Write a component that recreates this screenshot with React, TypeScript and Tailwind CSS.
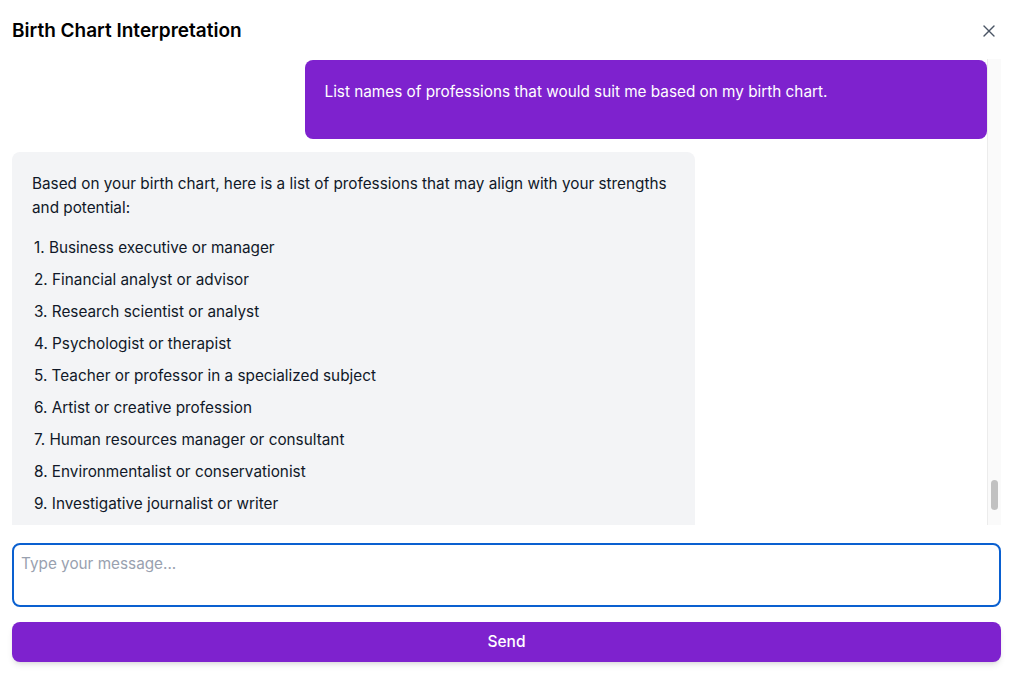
import { X } from "lucide-react"

const professions = [
  "Business executive or manager",
  "Financial analyst or advisor",
  "Research scientist or analyst",
  "Psychologist or therapist",
  "Teacher or professor in a specialized subject",
  "Artist or creative profession",
  "Human resources manager or consultant",
  "Environmentalist or conservationist",
  "Investigative journalist or writer",
]

export default function App() {
  return (
    <div
      className="h-screen flex flex-col bg-white text-gray-900 overflow-hidden"
      style={{ fontFamily: "Inter, 'Liberation Sans', sans-serif" }}
    >
      <div className="h-[59px] shrink-0 flex items-center justify-between pl-3 pr-[16px] pt-[3px]">
        <h1 className="text-[19px] font-semibold text-black">Birth Chart Interpretation</h1>
        <button className="text-gray-600">
          <X size={20} strokeWidth={1.6} />
        </button>
      </div>

      <div className="flex-1 min-h-0 flex ml-3 mr-[14px]">
        <div className="flex-1 min-w-0 overflow-hidden flex flex-col gap-[13px] pt-[1px]">
          <div className="self-end w-[70%] bg-[#7e22ce] text-white rounded-lg px-5 pt-5 pb-[35px] text-[15.3px] leading-6">
            List names of professions that would suit me based on my birth chart.
          </div>

          <div className="self-start w-[70%] bg-gray-100 rounded-lg px-5 pt-5 pb-5 text-[15.3px] leading-6 text-gray-900 shrink-0">
            <p className="mb-4">
              Based on your birth chart, here is a list of professions that may align with your strengths
              and potential:
            </p>
            <div className="flex flex-col gap-2">
              {professions.map((p, i) => (
                <div key={p} className="pl-[2px]">
                  {i + 1}. {p}
                </div>
              ))}
            </div>
          </div>
        </div>

        <div className="w-[14px] shrink-0 bg-[#fafafa] border-l border-[#ececec] relative">
          <div className="absolute left-[3px] top-[421px] w-[7px] h-[30px] rounded-full bg-[#c1c1c1]" />
        </div>
      </div>

      <div className="pl-3 pr-[14px] pt-[18px] pb-[15px] flex flex-col gap-[15px] shrink-0">
        <textarea
          placeholder="Type your message..."
          className="w-full h-16 resize-none rounded-lg border-2 border-[#0a60d0] px-[7px] py-[7px] text-[15.3px] leading-6 outline-none placeholder:text-gray-400"
        />
        <button className="w-full h-10 rounded-lg bg-[#7e22ce] text-white text-[15.5px] font-medium shadow-md">
          Send
        </button>
      </div>
    </div>
  )
}
